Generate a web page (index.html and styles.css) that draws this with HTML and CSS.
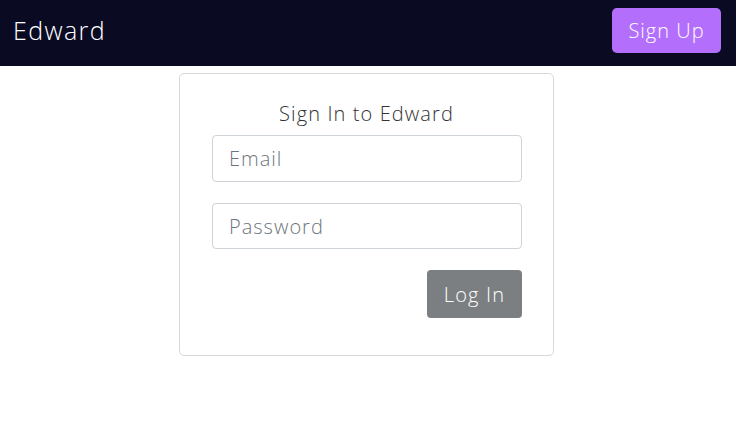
FILE: index.html
```html
<!DOCTYPE html>
<html>
<head>
<meta charset="utf-8">
<link rel="stylesheet" href="styles.css">
</head>
<body>
<nav class="navbar">
  <span class="brand">Edward</span>
  <button class="btn btn-signup">Sign Up</button>
</nav>
<main class="main">
  <form class="card">
    <h1 class="title">Sign In to Edward</h1>
    <input class="field" type="email" placeholder="Email">
    <input class="field" type="password" placeholder="Password">
    <div class="actions">
      <button class="btn btn-login" type="button">Log In</button>
    </div>
  </form>
</main>
</body>
</html>
```
FILE: styles.css
```css
* { box-sizing: border-box; }
html, body { margin: 0; padding: 0; background: #fff; }
body {
  font-family: "Open Sans", "Noto Sans", sans-serif;
  font-weight: 300;
  color: #212529;
}
.navbar {
  height: 66px;
  background: #0a0a23;
  display: flex;
  align-items: center;
  justify-content: space-between;
  padding: 0 15px 0 13px;
}
.brand {
  color: #fff;
  font-size: 25px;
  font-weight: 300;
  letter-spacing: 1.4px;
  margin-bottom: 6px;
}
.btn {
  font-family: inherit;
  font-weight: 300;
  border: none;
  border-radius: 5px;
  color: #fff;
  font-size: 20px;
  letter-spacing: 1px;
  cursor: pointer;
}
.btn-signup {
  background: #b36ffc;
  width: 109px;
  height: 45px;
  margin-top: -5px;
}
.main {
  display: flex;
  justify-content: center;
  padding-top: 7px;
}
.card {
  width: 375px;
  height: 283px;
  border: 1px solid #d6d8db;
  border-radius: 5px;
  padding: 26px 32px 0 32px;
  display: flex;
  flex-direction: column;
  margin-left: -3px;
}
.title {
  margin: 0 0 7px 0;
  text-align: center;
  font-size: 20px;
  font-weight: 300;
  color: #333;
  line-height: 28px;
  letter-spacing: 1.1px;
}
.field {
  display: block;
  width: 310px;
  height: 47px;
  border: 1px solid #ced4da;
  border-radius: 4px;
  padding: 0 16px;
  font-family: inherit;
  font-weight: 300;
  font-size: 20px;
  letter-spacing: 1px;
  margin-bottom: 21px;
  color: #495057;
}
.field + .field { height: 46px; }
.field::placeholder { color: #6c757d; opacity: 1; }
.actions {
  width: 310px;
  display: flex;
  justify-content: flex-end;
}
.btn-login {
  background: #7c7f82;
  width: 95px;
  height: 48px;
  border-radius: 4px;
  letter-spacing: 1.2px;
}
```
